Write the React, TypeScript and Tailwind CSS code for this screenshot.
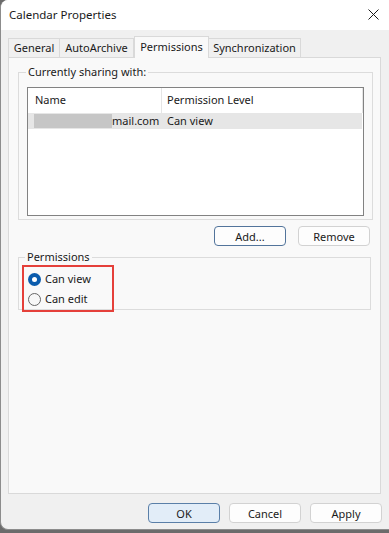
import React from "react";

const font = { fontFamily: '"Segoe UI", "Noto Sans", sans-serif' };

function Tab({ label, active, className = "" }: { label: string; active?: boolean; className?: string }) {
  if (active) {
    return (
      <div className={`relative -mb-px z-10 h-[22px] flex items-center justify-center border border-b-0 border-[#d9d9d9] bg-[#f9f9f9] ${className}`}>
        {label}
      </div>
    );
  }
  return (
    <div className={`h-[19px] flex items-center justify-center border border-b-0 border-[#d9d9d9] bg-[#f0f0f0] ${className}`}>
      {label}
    </div>
  );
}

function Button({ label, primary, className = "" }: { label: string; primary?: boolean; className?: string }) {
  return (
    <button
      className={`h-[20px] w-[72px] rounded-[4px] border text-[11px] leading-none text-[#1a1a1a] ${
        primary ? "border-[#52749b] bg-[#fdfdfd]" : "border-[#d2d2d2] bg-[#fdfdfd]"
      } ${className}`}
    >
      {label}
    </button>
  );
}

function Radio({ label, checked }: { label: string; checked?: boolean }) {
  return (
    <div className="flex items-center h-[20px]">
      {checked ? (
        <span className="w-[13px] h-[13px] rounded-full bg-[#0b5cad] flex items-center justify-center">
          <span className="w-[5px] h-[5px] rounded-full bg-white" />
        </span>
      ) : (
        <span className="w-[13px] h-[13px] rounded-full border border-[#666666] bg-[#f7f7f7]" />
      )}
      <span className="ml-[4px]">{label}</span>
    </div>
  );
}

export default function App() {
  return (
    <div className="w-[389px] h-[533px] bg-[#6b6b6b] overflow-hidden text-[11px] text-[#1a1a1a]" style={font}>
      <div className="w-[396px] h-[530px] bg-[#f0f0f0] rounded-l-[8px] border-l border-b border-[#8c8c8c] flex flex-col overflow-hidden">
        {/* Title bar */}
        <div className="h-[30px] bg-white flex items-center justify-between pl-[8px] pr-[17px] shrink-0">
          <span className="text-[11.5px]">Calendar Properties</span>
          <svg width="11" height="11" viewBox="0 0 11 11" className="mt-[-1px]">
            <path d="M0.5 0.5 L10.5 10.5 M10.5 0.5 L0.5 10.5" stroke="#1a1a1a" strokeWidth="1" />
          </svg>
        </div>

        {/* Tabs */}
        <div className="flex items-end pl-[7px] mt-[6px] h-[21px] shrink-0">
          <Tab label="General" className="w-[52px]" />
          <Tab label="AutoArchive" className="w-[74px] border-l-0" />
          <Tab label="Permissions" active className="w-[75px]" />
          <Tab label="Synchronization" className="w-[92px] border-l-0" />
        </div>

        {/* Panel */}
        <div className="ml-[7px] w-[373px] h-[437px] bg-[#f9f9f9] border border-[#d9d9d9] px-[9px] pt-[5px] shrink-0">
          <fieldset className="border border-[#dcdcdc] h-[157px] px-[8px] pb-[6px]">
            <legend className="-ml-[1px] px-[2px] leading-[18px]">Currently sharing with:</legend>
            <div className="mt-[6px] h-[129px] bg-white border border-[#828282] flex flex-col">
              <div className="h-[25px] flex items-center">
                <div className="w-[134px] h-full flex items-center pl-[7px] border-r border-[#e5e5e5]">Name</div>
                <div className="w-[201px] h-full flex items-center pl-[5px] border-r border-[#e5e5e5]">Permission Level</div>
              </div>
              <div className="h-[16px] mr-[1px] bg-[#e6e6e6] flex items-center">
                <div className="w-[134px] flex items-center pl-[6px]">
                  <span className="w-[78px] h-[14px] bg-[#c6c6c6]" />
                  <span>mail.com</span>
                </div>
                <div className="pl-[5px]">Can view</div>
              </div>
            </div>
          </fieldset>

          <div className="flex justify-end gap-[12px] mt-[6px] pr-[1px]">
            <Button label="Add..." primary />
            <Button label="Remove" />
          </div>

          <fieldset className="mt-[2px] border border-[#dcdcdc] h-[62px] pl-[3px]">
            <legend className="ml-[3px] px-[2px] leading-[18px]">Permissions</legend>
            <div className="w-[92px] border-2 border-[#e5403a] pl-[4px] pt-[2px] pb-[1px] -mt-[1px]">
              <Radio label="Can view" checked />
              <Radio label="Can edit" />
            </div>
          </fieldset>
        </div>

        {/* Footer */}
        <div className="flex gap-[9px] pl-[147px] mt-[9px]">
          <button className="h-[20px] w-[72px] rounded-[4px] border border-[#5a7fa8] bg-[#e2edf8] text-[11px] leading-none">OK</button>
          <Button label="Cancel" />
          <Button label="Apply" />
        </div>
      </div>
    </div>
  );
}
